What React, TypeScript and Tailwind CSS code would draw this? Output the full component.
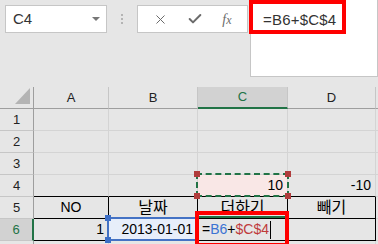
import React from 'react';
import { X, Check } from 'lucide-react';

const font = { fontFamily: '"Liberation Sans", "Noto Sans CJK KR", sans-serif' };

type CellProps = {
  children?: React.ReactNode;
  align?: 'left' | 'right' | 'center';
  dark?: boolean; // black table borders
  className?: string;
};

const Cell: React.FC<CellProps> = ({ children, align = 'left', dark, className = '' }) => {
  const justify = align === 'right' ? 'justify-end' : align === 'center' ? 'justify-center' : 'justify-start';
  return (
    <div
      className={`flex items-end ${justify} px-[4px] pb-[1px] text-[14px] leading-[19px] text-black border-r border-b ${
        dark ? 'border-black' : 'border-[#d4d4d4]'
      } ${className}`}
    >
      {children}
    </div>
  );
};

const RowHead: React.FC<{ n?: number; active?: boolean }> = ({ n, active }) => (
  <div
    className={`flex items-center justify-center text-[13px] border-b ${
      active
        ? 'bg-[#d2d2d2] text-[#217346] border-r-2 border-r-[#217346] border-b-[#c6c6c6]'
        : 'bg-[#e6e6e6] text-[#222] border-r border-r-[#9e9e9e] border-b-[#c6c6c6]'
    }`}
  >
    {n}
  </div>
);

const ColHead: React.FC<{ label: string; active?: boolean }> = ({ label, active }) => (
  <div
    className={`flex items-center justify-center text-[13px] border-r border-r-[#c6c6c6] ${
      active
        ? 'bg-[#d2d2d2] text-[#217346] border-b-2 border-b-[#217346]'
        : 'bg-[#e6e6e6] text-[#222] border-b border-b-[#9e9e9e]'
    }`}
  >
    {label}
  </div>
);

const Handle: React.FC<{ x: number; y: number; color: string }> = ({ x, y, color }) => (
  <div
    className="absolute w-[6px] h-[6px]"
    style={{ left: x - 3, top: y - 3, backgroundColor: color }}
  />
);

const Ko: React.FC<{ children: React.ReactNode }> = ({ children }) => (
  <span className="text-[16px] leading-[19px]">{children}</span>
);

export default function App() {
  return (
    <div className="relative w-[378px] h-[244px] overflow-hidden bg-[#e6e6e6]" style={font}>
      {/* formula bar area */}
      <div className="flex h-[87px]">
        <div className="flex items-start pt-[5px] pl-[5px]">
          <div className="w-[102px] h-[28px] bg-white border border-[#c6c6c6] flex items-center justify-between pl-[7px] pr-[6px]">
            <span className="text-[15px] text-[#333]">C4</span>
            <span className="w-0 h-0 border-l-[4px] border-r-[4px] border-t-[4px] border-l-transparent border-r-transparent border-t-[#777]" />
          </div>
          <div className="w-[30px] h-[28px] flex flex-col items-center justify-center gap-[2px]">
            <span className="w-[2px] h-[2px] bg-[#b4b4b4]" />
            <span className="w-[2px] h-[2px] bg-[#b4b4b4]" />
            <span className="w-[2px] h-[2px] bg-[#b4b4b4]" />
          </div>
          <div className="w-[111px] h-[28px] bg-white border border-[#c6c6c6] flex items-center justify-around px-[6px]">
            <X className="w-[15px] h-[15px] text-[#6b6b6b]" strokeWidth={1.6} />
            <Check className="w-[16px] h-[16px] text-[#6b6b6b]" strokeWidth={3} />
            <span className="text-[14px] italic text-[#6b6b6b]" style={{ fontFamily: '"Liberation Serif", serif' }}>
              f<span className="text-[12px]">x</span>
            </span>
          </div>
        </div>
        <div className="ml-[2px] w-[128px] h-[77px] bg-white border-l border-r border-b border-[#c6c6c6] pl-[12px] pt-[8px]">
          <span className="text-[15px] text-[#333] tracking-[0.2px]">=B6+$C$4</span>
        </div>
      </div>

      {/* sheet grid */}
      <div className="relative grid grid-cols-[34px_75px_89px_90px_88px_1fr] grid-rows-[22px_22px_22px_22px_22px_22px_22px_22px]">
        <div className="relative bg-[#e6e6e6] border-r border-r-[#9e9e9e] border-b border-b-[#9e9e9e]">
          <svg className="absolute left-[15px] top-[1px]" width="15" height="16" viewBox="0 0 15 16">
            <polygon points="15,0 15,16 0,16" fill="#b4b4b4" />
          </svg>
        </div>
        <ColHead label="A" />
        <ColHead label="B" />
        <ColHead label="C" active />
        <ColHead label="D" />
        <ColHead label="" />

        {[1, 2, 3].map((n) => (
          <React.Fragment key={n}>
            <RowHead n={n} />
            <Cell />
            <Cell />
            <Cell />
            <Cell />
            <Cell />
          </React.Fragment>
        ))}

        <RowHead n={4} />
        <Cell className="border-b-black" />
        <Cell className="border-b-black" />
        <Cell align="right" className="bg-[#f9e7e6] border-b-black">10</Cell>
        <Cell align="right" className="border-b-black">-10</Cell>
        <Cell />

        <RowHead n={5} />
        <Cell align="center" dark>NO</Cell>
        <Cell align="center" dark><Ko>날짜</Ko></Cell>
        <Cell align="center" dark><Ko>더하기</Ko></Cell>
        <Cell align="center" dark><Ko>빼기</Ko></Cell>
        <Cell />

        <RowHead n={6} active />
        <Cell align="right" dark>1</Cell>
        <Cell align="right" dark className="bg-[#e7eefa]">2013-01-01</Cell>
        <Cell dark>
          <span>=</span>
          <span className="text-[#3b73d3]">B6</span>
          <span>+</span>
          <span className="text-[#bf3b3b]">$C$4</span>
          <span className="inline-block w-[1px] h-[18px] bg-black ml-[1px]" />
        </Cell>
        <Cell dark />
        <Cell />

        <RowHead />
        <Cell />
        <Cell />
        <Cell />
        <Cell />
        <Cell />

        {/* copy range marquee on C4 */}
        <div className="absolute left-[196px] top-[86px] w-[93px] h-[24px] border-2 border-dashed border-[#217346]" />
        <Handle x={197} y={87} color="#b03c3c" />
        <Handle x={288} y={87} color="#b03c3c" />
        <Handle x={197} y={109} color="#b03c3c" />
        <Handle x={288} y={109} color="#b03c3c" />

        {/* referenced range B6 */}
        <div className="absolute left-[107px] top-[130px] w-[90px] h-[24px] border-2 border-[#4472c4]" />
        <Handle x={108} y={131} color="#3d6fc6" />
        <Handle x={108} y={153} color="#3d6fc6" />

        {/* active cell C6 */}
        <div className="absolute left-[196px] top-[129px] w-[93px] h-[26px] border-t-2 border-[#217346]" />

        {/* annotation */}
        <div className="absolute left-[195px] top-[124px] w-[94px] h-[36px] border-4 border-[#ff0000]" />
      </div>

      <div className="absolute left-[249px] top-0 w-[97px] h-[34px] border-4 border-[#ff0000]" />
    </div>
  );
}
